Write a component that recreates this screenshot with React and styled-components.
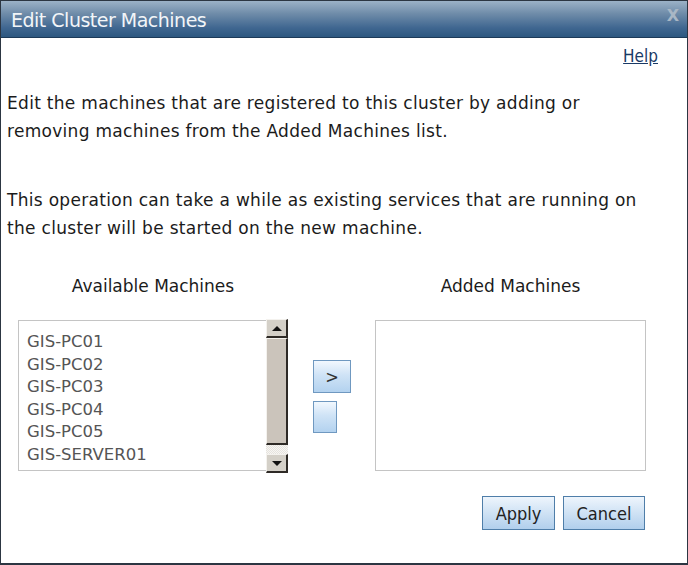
import React from 'react';
import styled, { createGlobalStyle } from 'styled-components';

const GlobalStyle = createGlobalStyle`
  html, body {
    margin: 0;
    padding: 0;
    background: #fff;
  }
  body {
    font-family: "DejaVu Sans", sans-serif;
  }
`;

const Dialog = styled.div`
  width: 688px;
  height: 565px;
  box-sizing: border-box;
  border: 1px solid #2c3642;
  border-bottom-width: 2px;
  display: flex;
  flex-direction: column;
  background: #fff;
`;

const TitleBar = styled.div`
  height: 37px;
  box-sizing: border-box;
  display: flex;
  align-items: center;
  justify-content: space-between;
  padding: 0 8px 0 10px;
  background: linear-gradient(to bottom, #9cb2c7 0%, #6f8ca9 35%, #3f6690 75%, #2d5880 100%);
  border-bottom: 1px solid #1c3a58;
`;

const Title = styled.span`
  color: #f2f5f8;
  font-size: 19px;
  letter-spacing: -0.5px;
  padding-top: 1px;
`;

const Close = styled.span`
  color: #a9b7c5;
  font-weight: bold;
  font-size: 16px;
  margin-top: -8px;
`;

const Body = styled.div`
  flex: 1;
  display: flex;
  flex-direction: column;
  padding: 0 0 0 6px;
`;

const HelpRow = styled.div`
  display: flex;
  justify-content: flex-end;
  padding: 7px 29px 0 0;
  height: 22px;
`;

const HelpLink = styled.a`
  color: #1a3a66;
  font-family: "DejaVu Sans Condensed", "DejaVu Sans", sans-serif;
  font-size: 17px;
  text-decoration: underline;
  line-height: 22px;
  cursor: pointer;
`;

const Para = styled.p`
  margin: ${p => p.$top}px 0 0;
  font-size: 17px;
  letter-spacing: 0.3px;
  line-height: 28px;
  color: #1b1b1b;
`;

const Lists = styled.div`
  display: flex;
  align-items: flex-start;
  margin-top: 30px;
  padding-left: 11px;
`;

const Column = styled.div`
  display: flex;
  flex-direction: column;
  width: ${p => p.$w}px;
`;

const ColHeader = styled.div`
  text-align: center;
  font-size: 17px;
  line-height: 28px;
  color: #1b1b1b;
  margin-bottom: 20px;
`;

const ListBox = styled.div`
  height: 151px;
  box-sizing: border-box;
  border: 1px solid #c4c4c4;
  display: flex;
`;

const Items = styled.ul`
  list-style: none;
  margin: 0;
  padding: 10px 0 0 8px;
  flex: 1;
`;

const Item = styled.li`
  font-size: 16.5px;
  line-height: 22.6px;
  color: #555;
`;

const ScrollBar = styled.div`
  width: 22px;
  margin: -2px -1px -3px 0;
  display: flex;
  flex-direction: column;
  background: repeating-conic-gradient(#e6e3de 0% 25%, #f7f6f3 0% 50%) 0 0 / 2px 2px;
`;

const ScrollButton = styled.div`
  height: 19px;
  box-sizing: border-box;
  background: #d4d0c8;
  border-top: 1px solid #f4f2ee;
  border-left: 1px solid #f4f2ee;
  border-right: 2px solid #2e2a26;
  border-bottom: 2px solid #2e2a26;
  display: flex;
  align-items: center;
  justify-content: center;
`;

const Thumb = styled.div`
  height: 107px;
  box-sizing: border-box;
  background: #cbc4bb;
  border-top: 1px solid #f4f2ee;
  border-left: 1px solid #f4f2ee;
  border-right: 2px solid #2e2a26;
  border-bottom: 2px solid #2e2a26;
`;

const Track = styled.div`
  flex: 1;
`;

const Arrow = styled.span`
  width: 0;
  height: 0;
  border-left: 5px solid transparent;
  border-right: 5px solid transparent;
  ${p => p.$down ? 'border-top: 5px solid #111;' : 'border-bottom: 5px solid #111;'}
`;

const Middle = styled.div`
  display: flex;
  flex-direction: column;
  align-items: flex-start;
  gap: 8px;
  width: 87px;
  padding: 88px 0 0 25px;
  box-sizing: border-box;
`;

const MoveButton = styled.button`
  width: ${p => p.$w}px;
  height: ${p => p.$h}px;
  box-sizing: border-box;
  border: 1px solid #6f98c0;
  background: linear-gradient(to bottom, #f2f8fe 0%, #cfe3f6 45%, #b3d2ef 100%);
  font-family: "DejaVu Sans Condensed", "DejaVu Sans", sans-serif;
  font-size: 18px;
  color: #333;
  padding: 0;
  margin: 0;
`;

const Footer = styled.div`
  display: flex;
  justify-content: flex-end;
  gap: 8px;
  padding: 25px 42px 0 0;
`;

const ActionButton = styled.button`
  width: ${p => p.$w}px;
  height: 34px;
  box-sizing: border-box;
  border: 1px solid #4f7ea9;
  background: linear-gradient(to bottom, #eef5fc 0%, #cfe2f4 50%, #b1cfec 100%);
  font-family: "DejaVu Sans Condensed", "DejaVu Sans", sans-serif;
  font-size: 18px;
  color: #222;
  padding: 0;
  margin: 0;
`;

const machines = ['GIS-PC01', 'GIS-PC02', 'GIS-PC03', 'GIS-PC04', 'GIS-PC05', 'GIS-SERVER01'];

const App = () => {
  return (
    <React.Fragment>
      <GlobalStyle />
      <Dialog>
        <TitleBar>
          <Title>Edit Cluster Machines</Title>
          <Close>X</Close>
        </TitleBar>
        <Body>
          <HelpRow>
            <HelpLink>Help</HelpLink>
          </HelpRow>
          <Para $top={22}>
            Edit the machines that are registered to this cluster by adding or<br />
            removing machines from the Added Machines list.
          </Para>
          <Para $top={41}>
            This operation can take a while as existing services that are running on<br />
            the cluster will be started on the new machine.
          </Para>
          <Lists>
            <Column $w={270}>
              <ColHeader>Available Machines</ColHeader>
              <ListBox>
                <Items>
                  {machines.map(m => <Item key={m}>{m}</Item>)}
                </Items>
                <ScrollBar>
                  <ScrollButton><Arrow /></ScrollButton>
                  <Thumb />
                  <Track />
                  <ScrollButton><Arrow $down /></ScrollButton>
                </ScrollBar>
              </ListBox>
            </Column>
            <Middle>
              <MoveButton $w={38} $h={33}>&gt;</MoveButton>
              <MoveButton $w={24} $h={32}></MoveButton>
            </Middle>
            <Column $w={271}>
              <ColHeader>Added Machines</ColHeader>
              <ListBox />
            </Column>
          </Lists>
          <Footer>
            <ActionButton $w={73}>Apply</ActionButton>
            <ActionButton $w={82}>Cancel</ActionButton>
          </Footer>
        </Body>
      </Dialog>
    </React.Fragment>
  );
};

export default App;
